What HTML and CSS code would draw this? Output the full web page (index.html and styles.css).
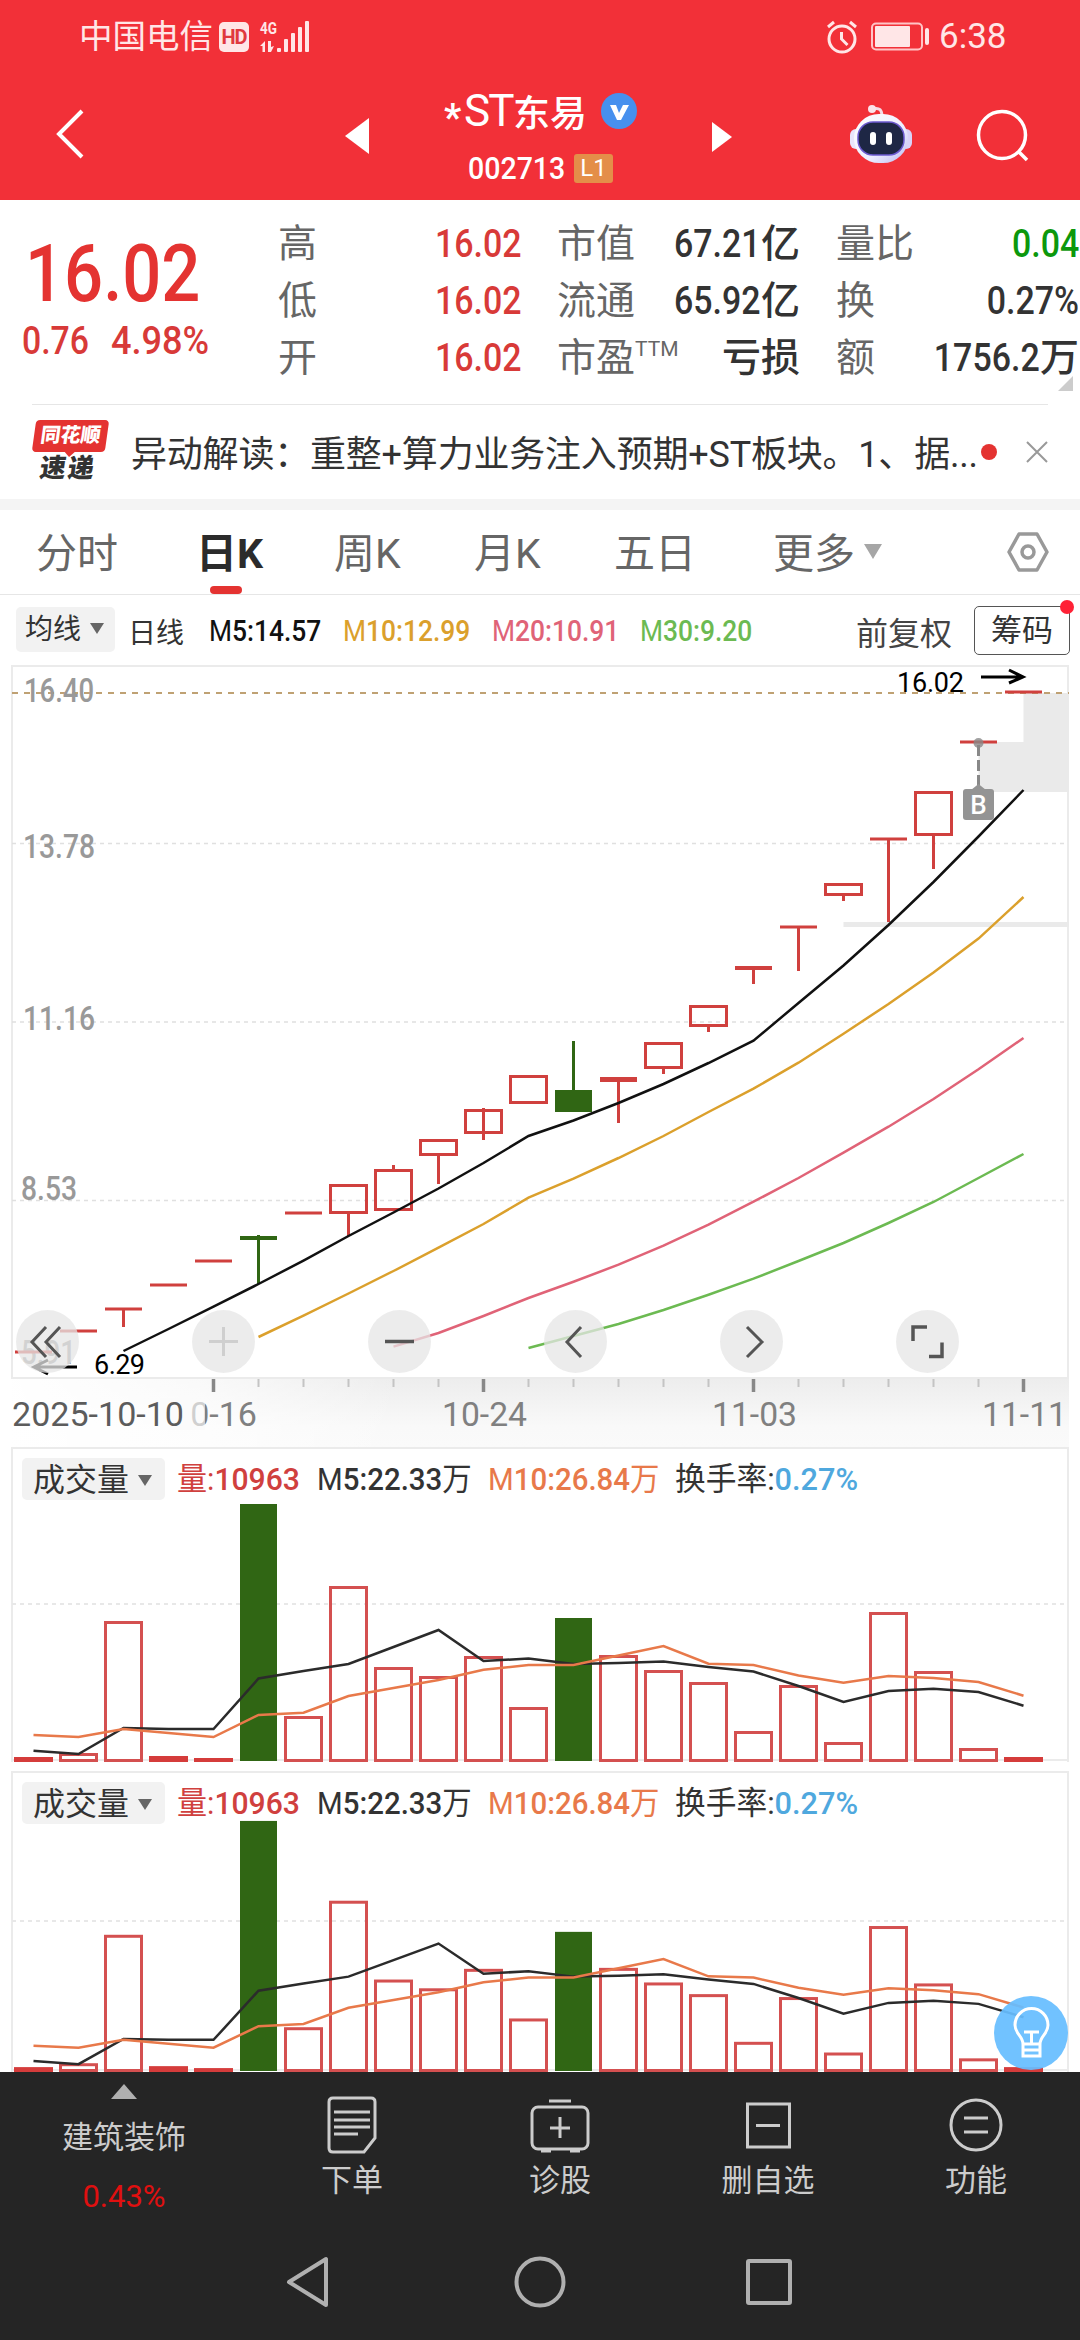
FILE: index.html
```
<!DOCTYPE html>
<html lang="zh-CN">

<head>
    <meta charset="UTF-8">
    <meta name="viewport" content="width=device-width, initial-scale=1.0">
    <title>*ST东易 002713</title>
    <link rel="stylesheet" href="styles.css">
</head>

<body>
    <header class="header">
        <div class="status">
            <span class="carrier">中国电信</span>
            <span class="hd">HD</span>
            <svg class="signal" width="52" height="44" viewBox="0 -5 52 44" fill="#ffe6e7">
                <text x="1" y="14" font-size="17" font-weight="700" textLength="17" lengthAdjust="spacingAndGlyphs">4G</text>
                <path d="M1 26l5-5v11H3.500v-6zM9 21h3v6l3-1-3 6H9z" />
                <rect x="18" y="28" width="4" height="4" rx="1" />
                <rect x="25" y="19" width="4" height="13" rx="1" />
                <rect x="32" y="13" width="4" height="19" rx="1" />
                <rect x="39" y="7" width="4" height="25" rx="1" />
                <rect x="46" y="1" width="4" height="31" rx="1" />
            </svg>
            <svg class="alarm" width="32" height="34" viewBox="0 0 32 34" fill="none" stroke="#ffe6e7" stroke-width="3">
                <circle cx="16" cy="19" r="13" />
                <path d="M15.500 12v7l6 6M2 7l6-5M30 7l-6-5" />
            </svg>
            <svg class="battery" width="60" height="30" viewBox="0 0 60 30">
                <rect x="1" y="1.500" width="50" height="26" rx="4" fill="none" stroke="#ffc4c6" stroke-width="2" />
                <rect x="4" y="4" width="35" height="21" rx="1" fill="#ffe6e7" />
                <rect x="54" y="6" width="4" height="17" rx="2" fill="#ffe6e7" />
            </svg>
            <span class="time">6:38</span>
        </div>
        <div class="nav">
            <svg class="back" width="28" height="52" viewBox="0 0 28 52" fill="none" stroke="#fff" stroke-width="4">
                <path d="M26 3L3 26l23 23" />
            </svg>
            <svg class="prev" width="24" height="36" viewBox="0 0 24 36"><path d="M24 0v36L0 18z" fill="#fff" /></svg>
            <div class="title">
                <div class="name"><span class="star">*</span><span class="st">ST</span>东易
                    <svg width="36" height="36" viewBox="0 0 36 36">
                        <circle cx="18" cy="18" r="18" fill="#4790ee" />
                        <path d="M9 12h6l3 8 4-8h6l-8 15h-4z" fill="#fff" />
                    </svg>
                </div>
                <div class="code"><span class="num">002713</span><span class="level">L1</span></div>
            </div>
            <svg class="next" width="20" height="30" viewBox="0 0 20 30"><path d="M0 0v30l20-15z" fill="#fff" /></svg>
            <svg class="robot" width="62" height="60" viewBox="0 0 62 60">
                <defs>
                    <linearGradient id="face" x1="0" y1="0" x2="1" y2="1">
                        <stop offset="0" stop-color="#fff" />
                        <stop offset=".6" stop-color="#eef" />
                        <stop offset="1" stop-color="#b9b8f0" />
                    </linearGradient>
                </defs>
                <path d="M22 5c8-2 10 1 10 8" fill="none" stroke="#f5dbe6" stroke-width="3" />
                <circle cx="22" cy="5" r="4" fill="#fbe3ea" />
                <rect x="0" y="25" width="12" height="20" rx="6" fill="#e9e4fb" />
                <rect x="50" y="25" width="12" height="20" rx="6" fill="#d9d2f8" />
                <rect x="4" y="10" width="54" height="49" rx="25" fill="url(#face)" />
                <rect x="8" y="18" width="46" height="33" rx="15" fill="#1e2745" stroke="#6b59cf" stroke-width="1.500" />
                <rect x="20" y="28" width="6" height="13" rx="3" fill="#fff" />
                <rect x="36" y="28" width="6" height="13" rx="3" fill="#fff" />
            </svg>
            <svg class="search" width="54" height="54" viewBox="0 0 54 54" fill="none" stroke="#fff" stroke-width="3.500">
                <circle cx="26" cy="26" r="23.500" />
                <path d="M42 42l9 9" />
            </svg>
        </div>
    </header>

    <section class="quote">
        <div class="price">
            <div class="last num">16.02</div>
            <div class="change"><span class="num">0.76</span><span class="num">4.98%</span></div>
        </div>
        <dl class="col">
            <dt>高</dt><dd class="red"><span class="num">16.02</span></dd>
            <dt>低</dt><dd class="red"><span class="num">16.02</span></dd>
            <dt>开</dt><dd class="red"><span class="num">16.02</span></dd>
        </dl>
        <dl class="col">
            <dt>市值</dt><dd><span class="num">67.21</span>亿</dd>
            <dt>流通</dt><dd><span class="num">65.92</span>亿</dd>
            <dt>市盈<sup>TTM</sup></dt><dd>亏损</dd>
        </dl>
        <dl class="col">
            <dt>量比</dt><dd class="green"><span class="num">0.04</span></dd>
            <dt>换</dt><dd><span class="num">0.27%</span></dd>
            <dt>额</dt><dd><span class="num">1756.2</span>万</dd>
        </dl>
        <i class="corner"></i>
    </section>

    <section class="news">
        <div class="logo">
            <span class="logo-top">同花顺</span>
            <span class="logo-bottom">速递</span>
        </div>
        <p>异动解读：重整+算力业务注入预期+ST板块。1、据...</p>
        <i class="dot"></i>
        <svg width="22" height="22" viewBox="0 0 22 22" stroke="#999" stroke-width="2"><path d="M1 1l20 20M21 1L1 21" /></svg>
    </section>

    <nav class="tabs">
        <span>分时</span>
        <span class="active">日K</span>
        <span>周K</span>
        <span>月K</span>
        <span>五日</span>
        <span class="more">更多<i class="arrow"></i></span>
        <svg width="42" height="40" viewBox="0 0 42 40" fill="none" stroke="#999" stroke-width="3.500" stroke-linejoin="round">
            <path d="M12 2h18l10 18-10 18H12L2 20z" />
            <circle cx="21" cy="20" r="6" />
        </svg>
    </nav>

    <section class="averages">
        <span class="select">均线<i class="arrow"></i></span>
        <span class="period">日线</span>
        <span class="ma ma5"><i>M</i>5:14.57</span>
        <span class="ma ma10"><i>M</i>10:12.99</span>
        <span class="ma ma20"><i>M</i>20:10.91</span>
        <span class="ma ma30"><i>M</i>30:9.20</span>
        <span class="adjust">前复权</span>
        <span class="chips">筹码<i class="dot"></i></span>
    </section>

    <svg id="kline" class="kline" width="1080" height="714" viewBox="0 665 1080 714">
        <rect x="12" y="666" width="1056" height="712" fill="none" stroke="#ebebeb" stroke-width="2" />
        <g stroke="#e0e0e0" stroke-width="1.500" stroke-dasharray="4 4">
            <path d="M12 843.500H1068M12 1022H1068M12 1200.500H1068" />
        </g>
        <path d="M1023.500 693H1069v99H978.500v-50h45zM843.500 922H1069v5H843.500z" fill="#eaeaea" />
        <path d="M12 693H1069" stroke="#bfa173" stroke-width="1.800" stroke-dasharray="6 6" />
        <g class="scale">
            <text x="24" y="702" textLength="70" lengthAdjust="spacingAndGlyphs">16.40</text>
            <text x="23" y="858" textLength="72" lengthAdjust="spacingAndGlyphs">13.78</text>
            <text x="23" y="1030" textLength="72" lengthAdjust="spacingAndGlyphs">11.16</text>
            <text x="21" y="1200" textLength="56" lengthAdjust="spacingAndGlyphs">8.53</text>
            <text x="21" y="1364" textLength="55" lengthAdjust="spacingAndGlyphs">5.91</text>
        </g>
        <g id="candles"></g>
        <g id="lines" fill="none" stroke-width="2.500"></g>

        <!-- buy mark -->
        <circle cx="978.500" cy="743" r="5" fill="#888" fill-opacity=".8" />
        <path d="M978.500 745v41" stroke="#888" stroke-width="3" stroke-dasharray="11 4" />
        <path d="M971 790l7.500-6 7.500 6z" fill="#949494" />
        <rect x="963" y="789" width="31" height="31" rx="3" fill="#949494" />
        <text x="978.500" y="814" font-size="26" font-weight="500" fill="#fff" text-anchor="middle">B</text>

        <!-- high and low -->
        <g font-size="27" fill="#000">
            <text x="897" y="692" textLength="67">16.02</text>
            <text x="94" y="1374" textLength="51">6.29</text>
        </g>
        <g fill="none" stroke="#000" stroke-width="3">
            <path d="M981 677h42M1009 670l14 7-14 6" />
            <path d="M77 1367H34M48 1360l-14 7 14 7" />
        </g>

        <!-- floating controls -->
        <g fill="#e6e6e6" fill-opacity=".75">
            <circle cx="47.500" cy="1341.500" r="31.500" />
            <circle cx="223.500" cy="1341.500" r="31.500" />
            <circle cx="399.500" cy="1341.500" r="31.500" />
            <circle cx="575.500" cy="1341.500" r="31.500" />
            <circle cx="751.500" cy="1341.500" r="31.500" />
            <circle cx="927.500" cy="1341.500" r="31.500" />
        </g>
        <g fill="none" stroke="#555" stroke-width="3">
            <path d="M46 1327l-14 15 14 15M60 1327l-14 15 14 15" />
            <path d="M209 1341.500h29M223.500 1327v29" stroke="#cfcfcf" />
            <path d="M385 1341.500h29" stroke-width="3.500" />
            <path d="M581 1327l-14 15 14 15M747 1327l15 15-15 15" />
            <path d="M927 1327h-14v14M929 1356.500h13v-14" stroke-width="3.500" />
        </g>
    </svg>

    <svg class="axis" width="1080" height="68" viewBox="0 1379 1080 68">
        <defs>
            <linearGradient id="shade" x1="0" y1="0" x2="0" y2="1">
                <stop offset="0" stop-color="#ededed" />
                <stop offset=".7" stop-color="#f9f9f9" />
                <stop offset="1" stop-color="#fafafa" />
            </linearGradient>
            <linearGradient id="fade" x1="0" y1="0" x2="1" y2="0">
                <stop offset="0" stop-color="#fff" />
                <stop offset=".5" stop-color="#fff" stop-opacity=".7" />
                <stop offset="1" stop-color="#fff" stop-opacity="0" />
            </linearGradient>
        </defs>
        <rect x="12" y="1379" width="1057" height="68" fill="url(#shade)" />
        <rect x="0" y="1379" width="400" height="68" fill="url(#fade)" />
        <g id="ticks"></g>
        <g class="dates">
            <text x="171" y="1426" textLength="86" lengthAdjust="spacingAndGlyphs">10-16</text>
            <text x="442" y="1426" textLength="85" lengthAdjust="spacingAndGlyphs">10-24</text>
            <text x="712" y="1426" textLength="85" lengthAdjust="spacingAndGlyphs">11-03</text>
            <text x="982" y="1426" textLength="85" lengthAdjust="spacingAndGlyphs">11-11</text>
            <rect x="160" y="1398" width="28" height="32" fill="#fbfbfb" />
            <rect x="188" y="1398" width="17" height="32" fill="#fbfbfb" fill-opacity=".65" />
            <text class="first" x="12" y="1426" textLength="172" lengthAdjust="spacingAndGlyphs">2025-10-10</text>
        </g>
    </svg>

    <section class="volume">
        <div class="legend">
            <span class="select">成交量<i class="arrow"></i></span>
            <span class="v1">量:<b>10963</b></span>
            <span class="v2">M<b>5:22.33</b>万</span>
            <span class="v3">M<b>10:26.84</b>万</span>
            <span class="v4">换手率:<em>0.27%</em></span>
        </div>
        <svg class="bars" data-base="1761" data-scale="1" data-grid="1604" width="1080" height="265" viewBox="0 1497 1080 265"></svg>
    </section>

    <section class="volume second">
        <div class="legend">
            <span class="select">成交量<i class="arrow"></i></span>
            <span class="v1">量:<b>10963</b></span>
            <span class="v2">M<b>5:22.33</b>万</span>
            <span class="v3">M<b>10:26.84</b>万</span>
            <span class="v4">换手率:<em>0.27%</em></span>
        </div>
        <svg class="bars" data-base="2071" data-scale="0.973" data-grid="1921" width="1080" height="251" viewBox="0 1821 1080 251"></svg>
        <svg class="tip" width="74" height="74" viewBox="0 0 74 74" fill="none" stroke="#fff" stroke-width="3">
            <circle cx="37" cy="37" r="37" fill="#66bdff" fill-opacity=".93" stroke="none" />
            <path d="M29 48c0-8-8-10-8-19a16.500 16.500 0 0 1 33 0c0 9-8 11-8 19zM29 48v12h17V48M29 54h17M37.500 48V36M30 36h15" />
        </svg>
    </section>

    <footer class="toolbar">
        <div class="sector">
            <i class="up"></i>
            <span>建筑装饰</span>
            <span class="pct">0.43%</span>
        </div>
        <div class="tool">
            <svg width="60" height="60" viewBox="0 0 60 60">
                <path d="M11 3h38q4 0 4 4v36L42 57H11q-4 0-4-4V7q0-4 4-4zM12 17h36M12 25h36M12 32h36M12 39h24" />
            </svg>
            <span>下单</span>
        </div>
        <div class="tool">
            <svg width="60" height="60" viewBox="0 0 60 60">
                <rect x="2" y="12" width="56" height="42" rx="6" />
                <path d="M19 6h22M30 22v21M20 33h20M11 56h10M40 56h10" />
            </svg>
            <span>诊股</span>
        </div>
        <div class="tool">
            <svg width="60" height="60" viewBox="0 0 60 60">
                <path d="M9.500 9h42v43h-42zM18 30.500h24" />
            </svg>
            <span>删自选</span>
        </div>
        <div class="tool">
            <svg width="60" height="60" viewBox="0 0 60 60">
                <circle cx="30" cy="30" r="25" />
                <path d="M18 23h24M18 37h24" />
            </svg>
            <span>功能</span>
        </div>
    </footer>
    <div class="system">
        <svg width="46" height="56" viewBox="0 0 46 56"><path d="M41 5v46L4 28z" /></svg>
        <svg width="52" height="56" viewBox="0 0 52 56"><circle cx="26" cy="28" r="23.500" /></svg>
        <svg width="48" height="56" viewBox="0 0 48 56"><rect x="3" y="7" width="42" height="42" rx="1" /></svg>
    </div>

    <script>
        const red = "#d0403e";
        const green = "#306614";
        const x = i => 33.5 + 45 * i;

        // [type, top, bottom, wick top, wick bottom]
        const candles = [
            ["line", 1350.5, 1353.5], ["line", 1329.5, 1332.5], ["line", 1307.5, 1310.5, 1309, 1327],
            ["line", 1283.5, 1286.5], ["line", 1259.5, 1262.5], ["down", 1236, 1240, 1235, 1284],
            ["line", 1211.5, 1214.5], ["up", 1184, 1214, 1214, 1236], ["up", 1169, 1211, 1165, 1169],
            ["up", 1139, 1156, 1156, 1184], ["up", 1109, 1134, 1108, 1140], ["up", 1075, 1104],
            ["down", 1090, 1112, 1041, 1090], ["line", 1077, 1082, 1080, 1123], ["up", 1042, 1069, 1069, 1074],
            ["up", 1005, 1027, 1027, 1032], ["line", 966, 970, 968, 984], ["line", 925.5, 928.5, 927, 971],
            ["up", 883, 896, 896, 901], ["line", 837.5, 840.5, 839, 922], ["up", 791, 836, 836, 869],
            ["line", 740.5, 743.5], ["line", 690.5, 693.5]
        ];

        const averages = [
            { color: "#111", start: 2, y: [1351, 1329, 1306.6, 1284, 1260.6, 1236, 1212.5, 1188.5, 1163, 1136, 1120.5, 1103, 1084, 1063, 1040.7, 1003, 965.5, 925, 882, 836.5, 790] },
            { color: "#dba02c", start: 5, y: [1337, 1315.7, 1293.5, 1271, 1247.6, 1224, 1197.6, 1178.6, 1158, 1136, 1112, 1088.7, 1062.7, 1033.7, 1004, 972.6, 938.6, 897] },
            { color: "#e06377", start: 8, y: [1346.6, 1333, 1316, 1298, 1281.7, 1264.7, 1245.7, 1224.7, 1201.7, 1178, 1152.7, 1126.7, 1099, 1069.3, 1038] },
            { color: "#6cba52", start: 11, y: [1348, 1336, 1324, 1310, 1294.7, 1278.7, 1261, 1243, 1223, 1202, 1178, 1154] }
        ];

        const volumes = [1757, 1753, 1621, 1756, 1758, 1504, 1716, 1586, 1667, 1676, 1656, 1707, 1618, 1655, 1670, 1682, 1731, 1685, 1742, 1612, 1671, 1748, 1757];
        const vol5 = [1750.7, 1754, 1728, 1729, 1729, 1678.5, 1671, 1664, 1647, 1630, 1661, 1658.5, 1664, 1663, 1661.5, 1667, 1671.5, 1686, 1702, 1691, 1688.7, 1692, 1705.7];
        const vol10 = [1735, 1737, 1729, 1733, 1737, 1715, 1712.7, 1696, 1688, 1680, 1669.7, 1665, 1665, 1655.5, 1646, 1663.7, 1665, 1675.5, 1682.7, 1676, 1678, 1682, 1695.7];

        function solid(i, top, bottom, color, w) {
            return `<rect x="${x(i) - w / 2}" y="${top}" width="${w}" height="${bottom - top}" fill="${color}"/>`;
        }

        function hollow(i, top, bottom, stroke) {
            return `<rect x="${x(i) - 18}" y="${top + 1.5}" width="36" height="${bottom - top - 3}" fill="none" stroke="${stroke}" stroke-width="3"/>`;
        }

        function line(ys, start, color) {
            return `<polyline points="${ys.map((y, i) => x(i + start) + "," + y).join(" ")}" stroke="${color}"/>`;
        }

        let html = "";
        candles.forEach(([type, top, bottom, w1, w2], i) => {
            if (w1) html += solid(i, w1, w2, type == "down" ? green : red, 3);
            if (type == "up") html += hollow(i, top, bottom, red);
            else html += solid(i, top, bottom, type == "down" ? green : red, 37);
        });
        document.querySelector("#candles").innerHTML = html;
        document.querySelector("#lines").innerHTML = averages.map(a => line(a.y, a.start, a.color)).join("");

        html = "";
        for (let i = 4; i < 23; i++) {
            const major = i == 4 || i == 10 || i == 16 || i == 22;
            html += solid(i, 1379, major ? 1392 : 1387, major ? "#888" : "#c4c4c4", major ? 3.5 : 2);
        }
        document.querySelector("#ticks").innerHTML = html;

        document.querySelectorAll(".bars").forEach(svg => {
            const base = +svg.dataset.base;
            const scale = +svg.dataset.scale;
            const fit = y => base - (1761 - y) * scale;
            let out = `<path d="M12 ${svg.dataset.grid}H1068" stroke="#e8e8e8" stroke-width="2" stroke-dasharray="4 4"/>`;
            out += `<path d="M12 ${base - 1}H1068" stroke="#ebebeb" stroke-width="2"/>`;
            volumes.forEach((v, i) => {
                if (i == 5 || i == 12) out += solid(i, fit(v), base, green, 37);
                else if (v >= 1756) out += solid(i, fit(v), base + 1, "#d53c3b", 39);
                else out += hollow(i, fit(v), base + 1, "#d45050");
            });
            out += `<g fill="none" stroke-width="2.5">${line(vol5.map(fit), 0, "#2b2b2b")}${line(vol10.map(fit), 0, "#e8794a")}</g>`;
            svg.innerHTML = out;
        });
    </script>
</body>

</html>
```
FILE: styles.css
```
* {
    margin: 0;
    padding: 0;
    box-sizing: border-box;
}

body {
    width: 1080px;
    height: 2340px;
    overflow: hidden;
    background-color: #fff;
    color: #333;
    font-family: Roboto, "Noto Sans CJK SC", sans-serif;
    display: flex;
    flex-direction: column;
}

body > * {
    flex: none;
}

svg {
    display: block;
    flex: none;
}

span,
p {
    white-space: nowrap;
}

.num {
    display: inline-block;
    font-weight: 500;
    transform: scaleX(.87);
    transform-origin: right;
}

/* header */
.header {
    height: 200px;
    background-color: #f23038;
    color: #fff;
}

.status {
    height: 73px;
    padding-left: 79px;
    display: flex;
    align-items: center;
    color: #ffe6e7;
}

.carrier {
    font-size: 33.5px;
    line-height: 40px;
    width: 140px;
}

.hd {
    width: 30px;
    height: 30px;
    border-radius: 5px;
    background-color: #ffe6e7;
    color: #e0393f;
    font-size: 20px;
    font-weight: 700;
    line-height: 30px;
    text-align: center;
    letter-spacing: -1px;
}

.signal {
    margin-left: 10px;
}

.alarm {
    margin-left: 515px;
}

.battery {
    margin-left: 13px;
}

.time {
    margin-left: 8px;
    font-size: 35px;
}

.nav {
    height: 127px;
    display: flex;
    align-items: flex-start;
}

.back {
    margin: 35px 0 0 56px;
}

.prev {
    margin: 45px 0 0 261px;
}

.title {
    margin: 14px 0 0 75px;
    width: 197px;
}

.name {
    height: 48px;
    display: flex;
    align-items: center;
    font-size: 37px;
    font-weight: 500;
}

.name svg {
    margin: 0 0 0 14px;
}

.name .star {
    width: 20px;
    font-size: 38px;
    font-weight: 700;
    padding-top: 14px;
}

.name .st {
    font-size: 44px;
    font-weight: 400;
    width: 49px;
    letter-spacing: -2px;
}

.code {
    display: flex;
    align-items: center;
    margin-top: 18px;
    padding-left: 24px;
    height: 30px;
    font-size: 31px;
}

.code .num {
    width: 106px;
    transform: scaleX(.92);
    transform-origin: left;
}

.level {
    width: 39px;
    height: 29px;
    border-radius: 3px;
    background-color: #e48e49;
    font-size: 24px;
    line-height: 29px;
    text-align: center;
}

.next {
    margin: 49px 0 0 71px;
}

.robot {
    margin: 31px 0 0 118px;
}

.search {
    margin: 36px 0 0 64px;
}

/* quote */
.quote {
    position: relative;
    height: 204px;
    padding-top: 16px;
    display: flex;
}

.price {
    width: 278px;
    color: #e43331;
}

.last {
    margin: 16px 0 0 25px;
    font-size: 79px;
    line-height: 84px;
    transform-origin: left;
}

.change {
    padding-left: 22px;
    margin-top: 1px;
    display: flex;
    font-size: 38px;
    line-height: 48px;
    color: #d83a38;
}

.change .num {
    width: 89px;
    transform: scaleX(.89);
    transform-origin: left;
}

.change .num:last-child {
    transform: scaleX(.95);
}

.col {
    width: 243px;
    height: 172px;
    margin-right: 36px;
    display: grid;
    grid-template-columns: auto 1fr;
    grid-auto-rows: 57.200px;
    line-height: 57px;
    font-size: 39px;
    white-space: nowrap;
}

.col:last-of-type {
    margin-right: 0;
}

.col dt {
    color: #666;
}

.col dd {
    text-align: right;
    font-weight: 500;
}

.col .num {
    margin-left: -24px;
}

.col sup {
    font-size: 21px;
    line-height: 0;
    vertical-align: 15px;
}

.red {
    color: #d83a38;
}

.green {
    color: #0c980c;
}

.corner {
    position: absolute;
    right: 7px;
    bottom: 13px;
    border-left: 15px solid transparent;
    border-bottom: 15px solid #ccc;
}

/* news */
.news {
    height: 95px;
    margin-left: 32px;
    width: 1016px;
    border-top: 1px solid #e6e6e6;
    display: flex;
    align-items: center;
    position: relative;
}

.logo {
    width: 77px;
    height: 64px;
    margin-right: 22px;
    font-weight: 900;
    text-align: center;
}

.logo span {
    display: block;
    transform: skewX(-8deg);
}

.logo-top {
    width: 73px;
    height: 32px;
    margin-left: 2px;
    border-radius: 4px;
    background-color: #e43331;
    color: #fff;
    font-size: 20px;
    line-height: 31px;
    position: relative;
}

.logo-top::after {
    content: '';
    position: absolute;
    left: 33px;
    top: 32px;
    border: 5px solid transparent;
    border-top-color: #e43331;
}

.logo-bottom {
    font-size: 26px;
    line-height: 32px;
    letter-spacing: 2px;
    margin-left: -5px;
}

.news p {
    font-size: 36px;
    width: 850px;
    margin-top: -3px;
    letter-spacing: -.2px;
}

.dot {
    width: 16px;
    height: 16px;
    border-radius: 50%;
    background-color: #e43331;
}

.news svg {
    margin-left: auto;
}

/* tabs */
.tabs {
    height: 96px;
    border-top: 11px solid #f4f4f4;
    border-bottom: 1px solid #e6e6e6;
    padding-left: 36px;
    display: flex;
    align-items: center;
    font-size: 41px;
    line-height: 88px;
    color: #666;
}

.tabs span {
    width: 140px;
    height: 84px;
}

.tabs span:first-child {
    width: 160px;
}

.tabs span:nth-child(2) {
    width: 138px;
}

.tabs span:nth-child(5) {
    width: 159px;
}

.tabs .active {
    position: relative;
    color: #2b2b2b;
    font-weight: 700;
}

.tabs .active::after {
    content: '';
    position: absolute;
    left: 14px;
    bottom: 0;
    width: 32px;
    height: 8px;
    border-radius: 4px;
    background-color: #e43331;
}

.arrow {
    display: inline-block;
    border: 7.500px solid transparent;
    border-top: 11px solid #666;
    border-bottom: 0;
    margin-left: 9px;
    vertical-align: 5px;
}

.tabs .arrow {
    border-width: 15px 9px 0;
    border-top-color: #a6a6a6;
    margin-left: 9px;
    vertical-align: 9px;
}

.tabs svg {
    margin-left: 94px;
}

/* averages */
.averages {
    height: 70px;
    padding: 2px 10px 0 16px;
    display: flex;
    align-items: center;
    font-size: 28px;
}

.select {
    background-color: #f2f2f2;
    border-radius: 5px;
}

.averages .select {
    width: 99px;
    height: 45px;
    line-height: 46px;
    padding-left: 9px;
    margin-top: -3px;
}

.period {
    margin-left: 13px;
    width: 81px;
}

.ma {
    font-size: 29px;
    font-weight: 500;
    transform: scaleX(.91);
    transform-origin: left;
}

.ma i {
    font-style: normal;
    font-weight: 400;
}

.ma5 {
    width: 134px;
    color: #111;
}

.ma10 {
    width: 149px;
    color: #dba02c;
}

.ma20 {
    width: 148px;
    color: #e06377;
}

.ma30 {
    color: #6cba52;
}

.adjust {
    margin-left: auto;
    font-size: 32px;
    color: #444;
}

.chips {
    position: relative;
    width: 96px;
    height: 49px;
    margin-top: -2px;
    margin-left: 22px;
    border: 1.500px solid #555;
    border-radius: 5px;
    font-size: 31px;
    line-height: 48px;
    text-align: center;
}

.chips .dot {
    position: absolute;
    top: -7px;
    right: -5px;
    width: 14px;
    height: 14px;
    background-color: #ff2236;
}

/* charts */
.scale text {
    font-size: 33px;
    font-weight: 500;
    fill: #999;
}

.dates text {
    font-size: 33px;
    font-weight: 400;
    fill: #808080;
}

.dates .first {
    fill: #5c5c5c;
}

.volume {
    width: 1058px;
    margin-left: 11px;
    border: 2px solid #ebebeb;
    border-bottom: 0;
    height: 315px;
}

.volume svg.bars {
    margin-left: -13px;
    overflow: visible;
}

.second {
    position: relative;
    margin-top: 9px;
    height: 301px;
}

.legend {
    height: 48px;
    padding: 9px 0 0 9px;
    display: flex;
    font-size: 32px;
    line-height: 42px;
}

.legend span {
    transform-origin: left;
}

.legend b {
    font-weight: 500;
}

.legend em {
    font-style: normal;
    font-weight: 500;
    color: #4fa8de;
}

.legend .select {
    width: 143px;
    height: 42px;
    padding-left: 11px;
    margin-right: 12px;
    line-height: 44px;
}

.legend .v1 {
    width: 140px;
    color: #d0403e;
    transform: scaleX(.94);
}

.legend .v2 {
    width: 171px;
    transform: scaleX(.92);
}

.legend .v3 {
    width: 187px;
    color: #e8794a;
    transform: scaleX(.92);
}

.legend .v4 {
    transform: scaleX(.96);
}

.tip {
    position: absolute;
    right: -1px;
    bottom: 2px;
}

/* bottom */
.toolbar {
    height: 145px;
    background-color: #252525;
    color: #ccc;
    display: flex;
    font-size: 31px;
    line-height: 40px;
}

.sector {
    width: 248px;
    padding-top: 12px;
    display: flex;
    flex-direction: column;
    align-items: center;
}

.up {
    border: 13px solid transparent;
    border-bottom: 15px solid #b0b0b0;
    border-top: 0;
}

.sector span {
    margin-top: 19px;
}

.sector .pct {
    color: #e01010;
}

.tool {
    width: 208px;
    padding-top: 23px;
    display: flex;
    flex-direction: column;
    align-items: center;
}

.tool svg {
    fill: none;
    stroke: #ccc;
    stroke-width: 3;
}

.tool span {
    margin-top: 6px;
}

.system {
    flex: 1;
    background-color: #252525;
    padding: 37px 0 0 285px;
    display: flex;
}

.system svg {
    fill: none;
    stroke: #b0b0b0;
    stroke-width: 4;
    stroke-linejoin: round;
}

.system svg:nth-child(2) {
    margin: 0 179px 0 183px;
}
```
